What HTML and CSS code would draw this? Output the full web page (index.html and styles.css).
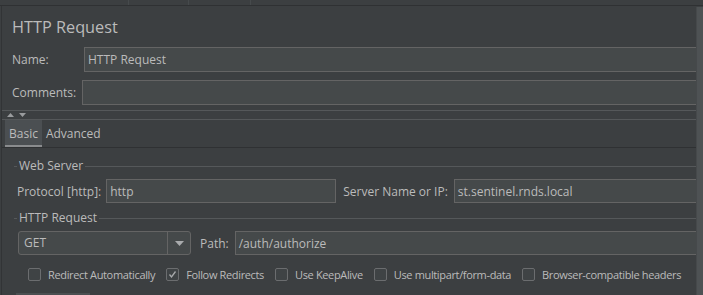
FILE: index.html
```html
<!DOCTYPE html>
<html lang="en">
<head>
    <meta charset="UTF-8">
    <meta name="viewport" content="width=device-width, initial-scale=1.0">
    <title>HTTP Request</title>
    <link rel="stylesheet" href="styles.css">
</head>
<body>
    <div class="topbar">
        <span class="seg seg-1"></span>
        <span class="seg seg-2"></span>
        <span class="seg seg-3"></span>
    </div>

    <div class="frame">
        <div class="panel">
            <h1 class="title">HTTP Request</h1>

            <div class="row name-row">
                <label class="lbl lbl-name">Name:</label>
                <div class="field grow">HTTP Request</div>
            </div>

            <div class="row comments-row">
                <label class="lbl lbl-comments">Comments:</label>
                <div class="field grow"></div>
            </div>

            <div class="splitter">
                <svg class="arrow" width="7" height="4" viewBox="0 0 7 4"><polygon points="0,4 3.5,0 7,4" fill="#9a9c9e"/></svg>
                <svg class="arrow" width="7" height="4" viewBox="0 0 7 4"><polygon points="0,0 7,0 3.5,4" fill="#9a9c9e"/></svg>
            </div>

            <div class="tabs">
                <div class="tab active">Basic</div>
                <div class="tab">Advanced</div>
            </div>

            <div class="tab-body">
                <div class="group-title">
                    <span class="gline gline-short"></span>
                    <span class="gtext">Web Server</span>
                    <span class="gline"></span>
                </div>

                <div class="row server-row">
                    <label class="lbl">Protocol [http]:</label>
                    <div class="field protocol">http</div>
                    <label class="lbl lbl-server">Server Name or IP:</label>
                    <div class="field grow">st.sentinel.rnds.local</div>
                </div>

                <div class="group-title group-request">
                    <span class="gline gline-short"></span>
                    <span class="gtext">HTTP Request</span>
                    <span class="gline"></span>
                </div>

                <div class="row request-row">
                    <div class="combo">
                        <span class="combo-value">GET</span>
                        <span class="combo-btn">
                            <svg width="9" height="5" viewBox="0 0 9 5"><polygon points="0,0 9,0 4.5,5" fill="#a9abad"/></svg>
                        </span>
                    </div>
                    <label class="lbl lbl-path">Path:</label>
                    <div class="field grow">/auth/authorize</div>
                </div>

                <div class="checks">
                    <div class="check"><span class="box"></span>Redirect Automatically</div>
                    <div class="check">
                        <span class="box">
                            <svg width="11" height="11" viewBox="0 0 11 11"><polyline points="2.5,5.5 4.5,8 8.5,2.5" fill="none" stroke="#a8aaac" stroke-width="1.3"/></svg>
                        </span>Follow Redirects
                    </div>
                    <div class="check"><span class="box"></span>Use KeepAlive</div>
                    <div class="check"><span class="box"></span>Use multipart/form-data</div>
                    <div class="check"><span class="box"></span>Browser-compatible headers</div>
                </div>

                <div class="next-bar"></div>
            </div>
        </div>
        <div class="scrollbar"></div>
    </div>
</body>
</html>
```

FILE: styles.css
```css
* {
    margin: 0;
    padding: 0;
    box-sizing: border-box;
}

body {
    font-family: 'Open Sans', 'Noto Sans', sans-serif;
    font-size: 12px;
    color: #bbbbbb;
    background: #3c3f41;
    height: 295px;
    overflow: hidden;
}

.topbar {
    display: flex;
    height: 6px;
    border-bottom: 1px solid #2f3133;
}

.seg {
    height: 5px;
    border-right: 1px solid #464a4c;
}

.seg-1 { width: 129px; }
.seg-2 { width: 60px; }
.seg-3 { width: 62px; }

.frame {
    display: flex;
    height: 289px;
}

.panel {
    flex: 1;
    margin-left: 1px;
    border-left: 1px solid #323436;
    min-width: 0;
    overflow: hidden;
}

.scrollbar {
    width: 7px;
    margin-top: 1px;
    background: #4e5254;
    border-left: 1px solid #46494b;
}

.title {
    font-size: 16.3px;
    font-weight: normal;
    line-height: 20px;
    height: 20px;
    margin: 11px 0 0 10px;
    color: #bbbbbb;
}

.row {
    display: flex;
    align-items: center;
}

.name-row {
    margin: 10px 0 0 10px;
    height: 25px;
}

.comments-row {
    margin: 8px 0 0 10px;
    height: 25px;
}

.lbl {
    white-space: nowrap;
}

.lbl-name { width: 72px; }
.lbl-comments { width: 70px; }

.field {
    height: 100%;
    background: #45494a;
    border: 1px solid #646464;
    padding-left: 3px;
    display: flex;
    align-items: center;
    white-space: nowrap;
    color: #bbbbbb;
}

.grow {
    flex: 1;
    margin-right: -3px;
}

.splitter {
    margin-top: 5px;
    height: 10px;
    border-top: 1px solid #55585a;
    border-bottom: 1px solid #55585a;
    display: flex;
    align-items: center;
    gap: 5px;
    padding-left: 5px;
}

.tabs {
    display: flex;
    height: 28px;
    padding-left: 3px;
    border-bottom: 1px solid #2f3133;
}

.tab {
    height: 27px;
    padding: 2px 4px 0;
    line-height: 23px;
    border-bottom: 2px solid transparent;
}

.tab.active {
    background: #4b4f52;
    border-bottom-color: #8a8c8e;
}

.tab-body {
    padding: 10px 0 0 12px;
}

.group-title {
    display: flex;
    height: 16px;
    line-height: 16px;
}

.group-request {
    margin-top: 7px;
}

.gline {
    flex: 1;
    height: 1px;
    margin-top: 8px;
    background: #55585a;
}

.gline-short {
    flex: none;
    width: 3px;
}

.gtext {
    padding: 0 2px;
}

.server-row {
    margin: 5px 0 0 3px;
    height: 24px;
}

.protocol {
    width: 230px;
    margin-left: 5px;
}

.lbl-server {
    margin: 0 6px 0 7px;
}

.request-row {
    margin: 5px 0 0 4px;
    height: 24px;
}

.combo {
    width: 173px;
    height: 24px;
    display: flex;
    background: #45494a;
    border: 1px solid #646464;
    border-radius: 3px;
}

.combo-value {
    flex: 1;
    padding-left: 5px;
    line-height: 22px;
}

.combo-btn {
    width: 23px;
    border-left: 1px solid #646464;
    display: flex;
    align-items: center;
    justify-content: center;
}

.lbl-path {
    margin: 0 6px 0 9px;
}

.checks {
    display: flex;
    align-items: center;
    gap: 11px;
    height: 24px;
    margin: 7px 0 0 14px;
    font-size: 11px;
    letter-spacing: -0.35px;
}

.check {
    display: flex;
    align-items: center;
    gap: 7px;
    white-space: nowrap;
}

.box {
    width: 13px;
    height: 13px;
    border: 1px solid #6b6d6f;
    border-radius: 2px;
    background: #3f4345;
    display: flex;
    align-items: center;
    justify-content: center;
}

.next-bar {
    margin: 7px 0 0 2px;
    width: 74px;
    height: 4px;
    background: #4b4f51;
}
```
